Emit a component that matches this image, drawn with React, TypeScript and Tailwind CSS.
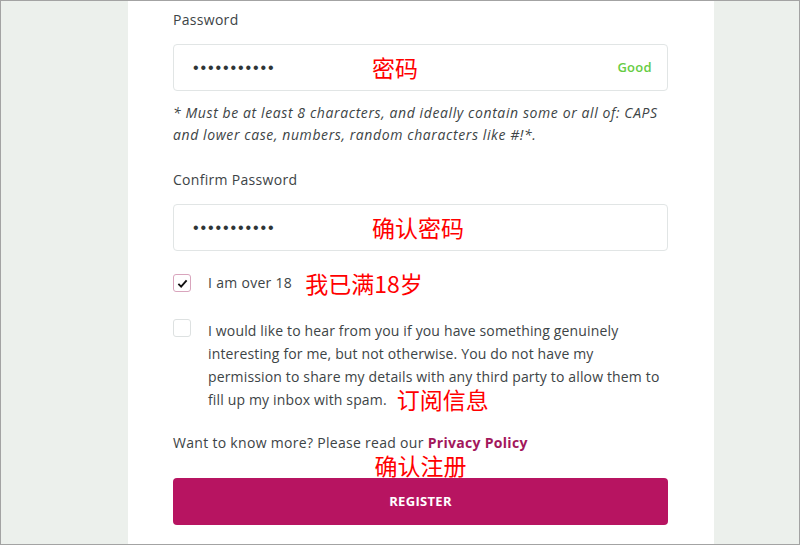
import React from 'react'

const font = { fontFamily: '"Open Sans", "Noto Sans CJK SC", sans-serif' }

function Note({ children, className = '' }: { children: React.ReactNode; className?: string }) {
  return (
    <span className={`text-[23px] text-[#ff0000] tracking-normal [font-family:'Noto_Sans_CJK_SC',sans-serif] ${className}`}>
      {children}
    </span>
  )
}

function PasswordInput({ note, strength }: { note: string; strength?: string }) {
  return (
    <div className="relative mt-[14px] flex h-[47px] items-center rounded-[4px] border border-[#e1e5e5] bg-white pl-[19px] pr-[15px]">
      <span className="text-[16px] tracking-[1.9px] text-[#2f3537] [font-family:'Liberation_Sans',sans-serif]">
        •••••••••••
      </span>
      <Note className="absolute left-[198px] top-[9px] leading-[26px]">{note}</Note>
      {strength && (
        <span className="ml-auto text-[13px] font-semibold text-[#66cc44]">{strength}</span>
      )}
    </div>
  )
}

export default function App() {
  return (
    <div
      className="flex h-[545px] w-[800px] overflow-hidden border border-[#a3a3a3] bg-[#ecf0ec] text-[#3d4446] tracking-[0.3px]"
      style={font}
    >
      <div className="w-[127px] shrink-0" />

      {/* Form panel */}
      <div className="w-[586px] shrink-0 bg-white pl-[45px] pr-[46px]">
        <p className="pt-[9px] text-[14px] leading-[20px]">Password</p>
        <PasswordInput note="密码" strength="Good" />

        <p className="mt-[11px] text-[14px] italic leading-[22px] tracking-[0.6px]">
          * Must be at least 8 characters, and ideally contain some or all of: CAPS and lower case,
          numbers, random characters like #!*.
        </p>

        <p className="mt-[24px] text-[14px] leading-[20px]">Confirm Password</p>
        <PasswordInput note="确认密码" />

        <label className="mt-[23px] flex h-[18px] items-center">
          <span className="flex h-[18px] w-[18px] shrink-0 items-center justify-center rounded-[3px] border border-[#d9a5bd]">
            <svg viewBox="0 0 12 12" className="h-[11px] w-[11px]">
              <path d="M1.5 6.5l3 3 6-7" fill="none" stroke="#111" strokeWidth="2" />
            </svg>
          </span>
          <span className="ml-[17px] text-[14px] leading-[20px]">I am over 18</span>
          <Note className="ml-[13px] leading-[26px]">我已满18岁</Note>
        </label>

        <label className="mt-[27px] flex items-start">
          <span className="h-[18px] w-[18px] shrink-0 rounded-[3px] border border-[#dde1e1]" />
          <span className="ml-[17px] text-[14px] leading-[23px] tracking-[0.15px]">
            I would like to hear from you if you have something genuinely interesting for me, but not
            otherwise. You do not have my permission to share my details with any third party to
            allow them to fill up my inbox with spam.
            <Note className="ml-[10px] align-top leading-[23px]">订阅信息</Note>
          </span>
        </label>

        <p className="mt-[22px] text-[14px] leading-[20px]">
          Want to know more? Please read our{' '}
          <a className="font-bold text-[#a3175c]">Privacy Policy</a>
        </p>
        <div className="h-[24px] text-center leading-[24px]">
          <Note>确认注册</Note>
        </div>

        <button className="mt-[1px] flex h-[47px] w-full items-center justify-center rounded-[4px] bg-[#b71461] text-[13px] font-bold text-white">
          REGISTER
        </button>
      </div>

      <div className="flex-1" />
    </div>
  )
}
